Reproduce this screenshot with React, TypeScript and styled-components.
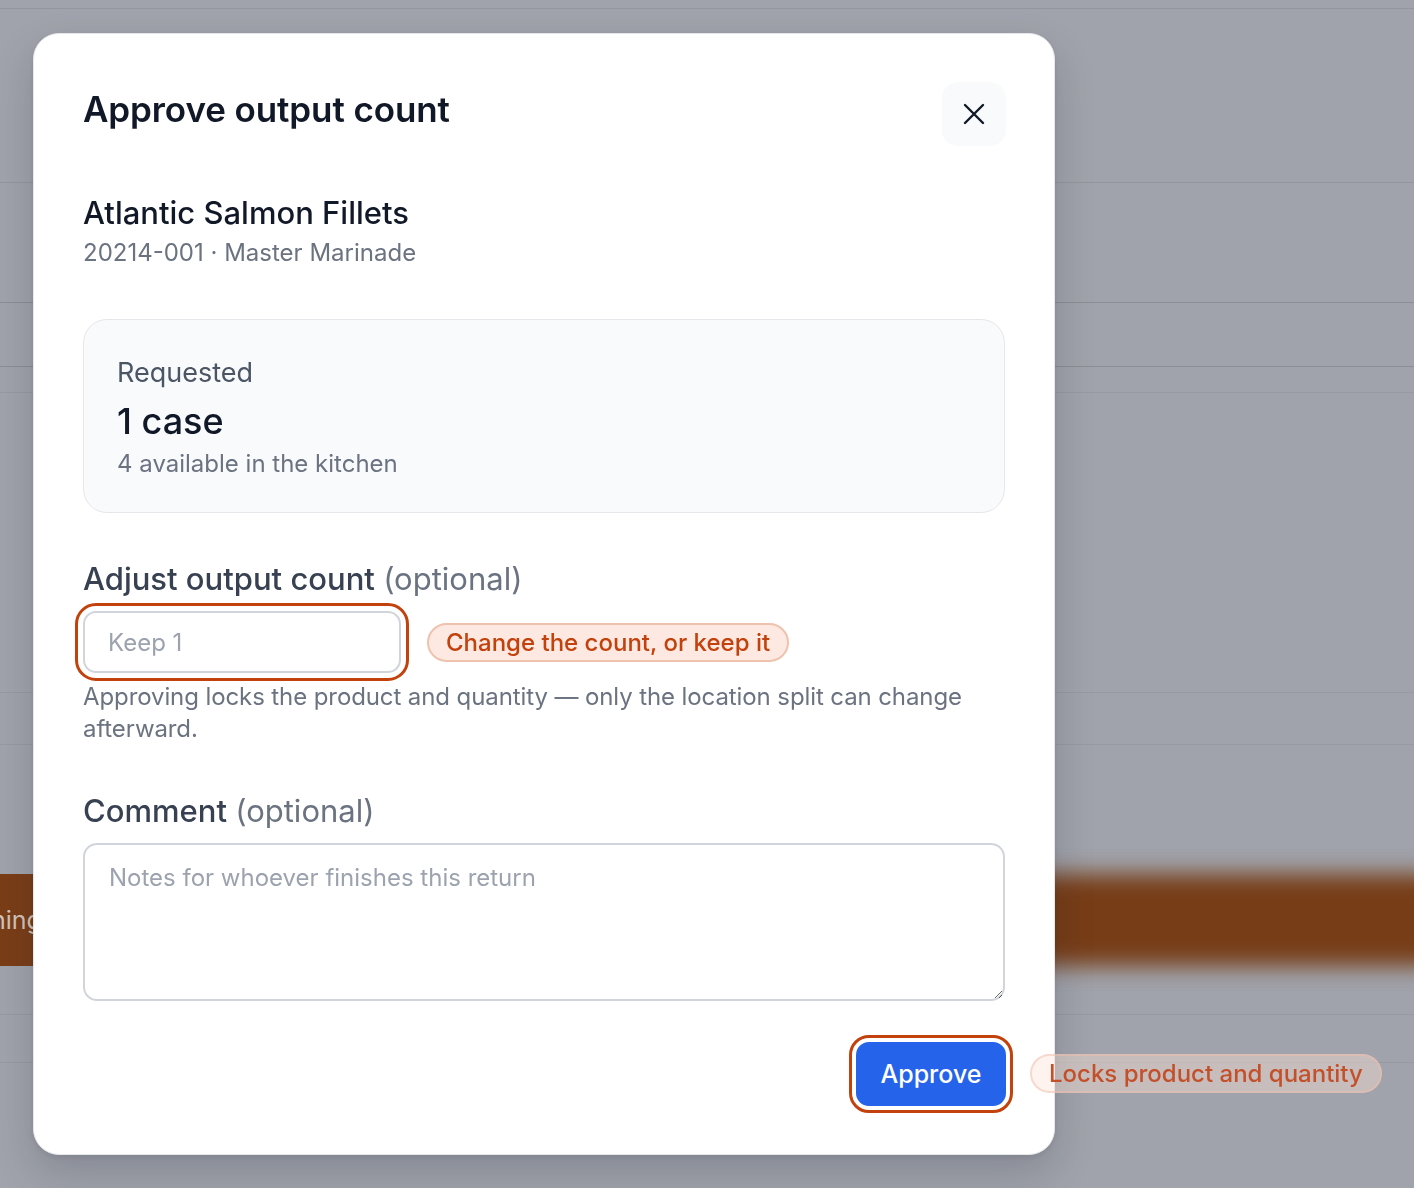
import * as React from 'react';
import styled, { createGlobalStyle } from 'styled-components';

const GlobalStyle = createGlobalStyle`
  html, body {
    margin: 0;
    padding: 0;
    height: 100%;
    overflow: hidden;
    background: #a0a3ab;
    font-family: Inter, "Noto Sans", "Liberation Sans", sans-serif;
    -webkit-font-smoothing: antialiased;
  }
  * { box-sizing: border-box; }
`;

// faded page behind the dialog
const Page = styled.div`
  display: flex;
  flex-direction: column;
  width: 100%;
  height: 1188px;
  background: #a0a3ab;
`;

const PageRow = styled.div<{ $h: number; $line?: string }>`
  flex: 0 0 ${p => p.$h}px;
  border-bottom: ${p => (p.$line ? `1px solid ${p.$line}` : 'none')};
`;

const PageBar = styled.div`
  flex: 0 0 92px;
  display: flex;
  align-items: stretch;
`;

const BarStub = styled.div`
  flex: 0 0 60px;
  background: #7a3e17;
  color: #d3c4b9;
  font-size: 25px;
  display: flex;
  align-items: center;
  overflow: hidden;
  white-space: nowrap;
  span { margin-left: -9px; }
`;

const BarBlur = styled.div`
  flex: 1 1 auto;
  margin-right: -40px;
  background: #773d17;
  filter: blur(11px);
`;

const Overlay = styled.div`
  position: fixed;
  inset: 0;
`;

const Dialog = styled.div`
  position: absolute;
  left: 33px;
  top: 33px;
  width: 1022px;
  background: #ffffff;
  border: 1px solid #e5e7eb;
  border-radius: 26px;
  box-shadow: 0 18px 40px rgba(15, 23, 42, 0.18), 0 2px 6px rgba(15, 23, 42, 0.08);
  padding: 48px 49px;
  display: flex;
  flex-direction: column;
`;

const Header = styled.div`
  display: flex;
  justify-content: space-between;
  align-items: flex-start;
`;

const Title = styled.h2`
  margin: 7px 0 0;
  font-size: 35px;
  line-height: 41px;
  font-weight: 600;
  color: #111827;
  letter-spacing: -0.1px;
`;

const CloseButton = styled.button`
  width: 64px;
  height: 64px;
  border: none;
  border-radius: 16px;
  background: #f8fafc;
  display: flex;
  align-items: center;
  justify-content: center;
  margin-right: -1px;
  cursor: pointer;
`;

const Product = styled.div`
  margin-top: 49px;
  display: flex;
  flex-direction: column;
  gap: 6px;
`;

const ProductName = styled.div`
  font-size: 31px;
  line-height: 36px;
  font-weight: 500;
  color: #111827;
`;

const ProductMeta = styled.div`
  font-size: 24px;
  line-height: 32px;
  color: #6b7280;
`;

const Summary = styled.div`
  margin-top: 50px;
  height: 194px;
  border: 1px solid #e5e7eb;
  border-radius: 24px;
  background: #f8fafc;
  padding: 36px 33px 0;
  display: flex;
  flex-direction: column;
`;

const SummaryLabel = styled.div`
  font-size: 27px;
  line-height: 34px;
  color: #4b5563;
`;

const SummaryValue = styled.div`
  margin-top: 11px;
  font-size: 36px;
  line-height: 40px;
  font-weight: 500;
  color: #111827;
`;

const SummaryNote = styled.div`
  margin-top: 7px;
  font-size: 24px;
  line-height: 32px;
  color: #6b7280;
`;

const Field = styled.div<{ $top: number }>`
  margin-top: ${p => p.$top}px;
  display: flex;
  flex-direction: column;
`;

const Label = styled.label`
  font-size: 31px;
  line-height: 38px;
  font-weight: 500;
  color: #374151;
`;

const Optional = styled.span`
  font-weight: 400;
  color: #6b7280;
`;

const InputRow = styled.div`
  margin-top: 13px;
  display: flex;
  align-items: center;
  gap: 26px;
`;

const CountInput = styled.input`
  width: 318px;
  height: 62px;
  border: 2px solid #d1d5db;
  border-radius: 13px;
  padding: 0 23px;
  font-family: inherit;
  font-size: 24px;
  color: #111827;
  outline: 3px solid #c2410c;
  outline-offset: 5px;
  &::placeholder { color: #9ca3af; }
`;

const Hint = styled.span<{ $faded?: boolean }>`
  display: inline-flex;
  align-items: center;
  height: 39px;
  padding: 0 17px;
  border-radius: 999px;
  border: 2px solid ${p => (p.$faded ? 'rgba(239, 190, 170, 0.5)' : '#efc2ae')};
  background: ${p => (p.$faded ? 'rgba(253, 226, 214, 0.42)' : '#fde9e1')};
  color: ${p => (p.$faded ? '#c4502a' : '#c2410c')};
  font-size: 24px;
  font-weight: 500;
  white-space: nowrap;
`;

const Help = styled.p`
  margin: 8px 0 0;
  font-size: 24px;
  line-height: 32px;
  color: #6b7280;
  letter-spacing: -0.1px;
`;

const CommentBox = styled.textarea`
  margin-top: 13px;
  height: 158px;
  border: 2px solid #d1d5db;
  border-radius: 14px;
  padding: 17px 24px;
  font-family: inherit;
  font-size: 24px;
  line-height: 32px;
  color: #111827;
  resize: vertical;
  outline: none;
  &::placeholder { color: #9ca3af; }
`;

const Footer = styled.div`
  margin-top: 41px;
  display: flex;
  justify-content: flex-end;
`;

const ApproveWrap = styled.div`
  position: relative;
  display: flex;
`;

const ApproveButton = styled.button`
  width: 150px;
  height: 64px;
  border: none;
  border-radius: 13px;
  background: #2563eb;
  color: #ffffff;
  font-family: inherit;
  font-size: 25px;
  font-weight: 500;
  margin-right: -1px;
  outline: 3px solid #c2410c;
  outline-offset: 4px;
  cursor: pointer;
`;

const FloatingHint = styled.div`
  position: absolute;
  left: 174px;
  top: 12px;
`;

const CloseIcon = () => (
  <svg width="22" height="22" viewBox="0 0 22 22" fill="none">
    <path d="M2 2L20 20M20 2L2 20" stroke="#111827" strokeWidth="2.4" strokeLinecap="round" />
  </svg>
);

export default function App() {
  return (
    <>
      <GlobalStyle />
      <Page>
        <PageRow $h={9} $line="#93969d" />
        <PageRow $h={174} $line="#93969d" />
        <PageRow $h={120} $line="#8a8d94" />
        <PageRow $h={64} $line="#8a8d94" />
        <PageRow $h={26} $line="#979aa1" />
        <PageRow $h={300} $line="#979aa1" />
        <PageRow $h={52} $line="#979aa1" />
        <PageRow $h={129} />
        <PageBar>
          <BarStub><span>hing</span></BarStub>
          <BarBlur />
        </PageBar>
        <PageRow $h={49} $line="#979aa1" />
        <PageRow $h={48} $line="#979aa1" />
      </Page>
      <Overlay>
        <Dialog role="dialog">
          <Header>
            <Title>Approve output count</Title>
            <CloseButton aria-label="Close">
              <CloseIcon />
            </CloseButton>
          </Header>

          <Product>
            <ProductName>Atlantic Salmon Fillets</ProductName>
            <ProductMeta>20214-001 · Master Marinade</ProductMeta>
          </Product>

          <Summary>
            <SummaryLabel>Requested</SummaryLabel>
            <SummaryValue>1 case</SummaryValue>
            <SummaryNote>4 available in the kitchen</SummaryNote>
          </Summary>

          <Field $top={47}>
            <Label>
              Adjust output count <Optional>(optional)</Optional>
            </Label>
            <InputRow>
              <CountInput placeholder="Keep 1" />
              <Hint>Change the count, or keep it</Hint>
            </InputRow>
            <Help>
              Approving locks the product and quantity — only the location split can change afterward.
            </Help>
          </Field>

          <Field $top={47}>
            <Label>
              Comment <Optional>(optional)</Optional>
            </Label>
            <CommentBox placeholder="Notes for whoever finishes this return" />
          </Field>

          <Footer>
            <ApproveWrap>
              <ApproveButton>Approve</ApproveButton>
              <FloatingHint>
                <Hint $faded>Locks product and quantity</Hint>
              </FloatingHint>
            </ApproveWrap>
          </Footer>
        </Dialog>
      </Overlay>
    </>
  );
}
